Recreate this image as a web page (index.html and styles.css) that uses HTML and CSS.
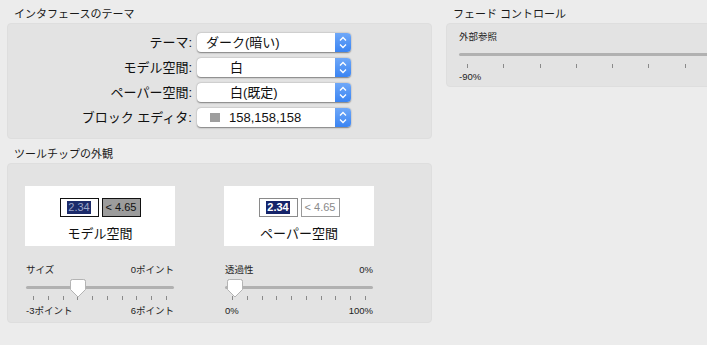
FILE: index.html
```html
<!DOCTYPE html>
<html lang="ja">
<head>
<meta charset="utf-8">
<link rel="stylesheet" href="styles.css">
</head>
<body>
<div class="page">
  <div class="col-left">
    <div class="group-title first">インタフェースのテーマ</div>
    <div class="panel theme-panel">
      <span class="label">テーマ:</span>
      <div class="popup"><span class="value">ダーク(暗い)</span><span class="stepper"><svg width="16" height="19" viewBox="0 0 16 19"><path d="M5 7.5 L8 4.5 L11 7.5 M5 11.5 L8 14.5 L11 11.5" fill="none" stroke="#fff" stroke-width="1.3"/></svg></span></div>
      <span class="label">モデル空間:</span>
      <div class="popup"><span class="value indent">白</span><span class="stepper"><svg width="16" height="19" viewBox="0 0 16 19"><path d="M5 7.5 L8 4.5 L11 7.5 M5 11.5 L8 14.5 L11 11.5" fill="none" stroke="#fff" stroke-width="1.3"/></svg></span></div>
      <span class="label">ペーパー空間:</span>
      <div class="popup"><span class="value indent">白(既定)</span><span class="stepper"><svg width="16" height="19" viewBox="0 0 16 19"><path d="M5 7.5 L8 4.5 L11 7.5 M5 11.5 L8 14.5 L11 11.5" fill="none" stroke="#fff" stroke-width="1.3"/></svg></span></div>
      <span class="label">ブロック エディタ:</span>
      <div class="popup"><span class="swatch"></span><span class="value">158,158,158</span><span class="stepper"><svg width="16" height="19" viewBox="0 0 16 19"><path d="M5 7.5 L8 4.5 L11 7.5 M5 11.5 L8 14.5 L11 11.5" fill="none" stroke="#fff" stroke-width="1.3"/></svg></span></div>
    </div>
    <div class="group-title second">ツールチップの外観</div>
    <div class="panel tooltip-panel">
      <div class="tt-col">
        <div class="preview">
          <div class="chips">
            <span class="chip model-a"><span class="sel">2.34</span></span>
            <span class="chip model-b">&lt; 4.65</span>
          </div>
          <div class="preview-label">モデル空間</div>
        </div>
        <div class="slider">
          <div class="slider-row"><span>サイズ</span><span>0ポイント</span></div>
          <div class="track-wrap">
            <div class="track"></div>
            <svg class="thumb thumb-size" width="16" height="19" viewBox="0 0 16 19"><path d="M2.5 0.5 H13.5 A2 2 0 0 1 15.5 2.5 V10.5 L8 18 L0.5 10.5 V2.5 A2 2 0 0 1 2.5 0.5 Z" fill="#fff" stroke="#b4b4b4"/></svg>
          </div>
          <div class="ticks"><i></i><i></i><i></i><i></i><i></i><i></i><i></i><i></i><i></i><i></i></div>
          <div class="slider-row foot"><span>-3ポイント</span><span>6ポイント</span></div>
        </div>
      </div>
      <div class="tt-col">
        <div class="preview">
          <div class="chips">
            <span class="chip paper-a"><span class="sel bold">2.34</span></span>
            <span class="chip paper-b">&lt; 4.65</span>
          </div>
          <div class="preview-label">ペーパー空間</div>
        </div>
        <div class="slider">
          <div class="slider-row"><span>透過性</span><span>0%</span></div>
          <div class="track-wrap">
            <div class="track"></div>
            <svg class="thumb thumb-trans" width="16" height="19" viewBox="0 0 16 19"><path d="M2.5 0.5 H13.5 A2 2 0 0 1 15.5 2.5 V10.5 L8 18 L0.5 10.5 V2.5 A2 2 0 0 1 2.5 0.5 Z" fill="#fff" stroke="#b4b4b4"/></svg>
          </div>
          <div class="ticks"><i></i><i></i><i></i><i></i><i></i><i></i><i></i><i></i><i></i><i></i></div>
          <div class="slider-row foot"><span>0%</span><span>100%</span></div>
        </div>
      </div>
    </div>
  </div>
  <div class="col-right">
    <div class="group-title first">フェード コントロール</div>
    <div class="panel fade-panel">
      <div class="fade-label">外部参照</div>
      <div class="fade-track"></div>
      <div class="fade-ticks"><i></i><i></i><i></i><i></i><i></i><i></i><i></i></div>
      <div class="fade-foot">-90%</div>
    </div>
  </div>
</div>
</body>
</html>
```

FILE: styles.css
```css
* { box-sizing: border-box; }
html, body {
  margin: 0;
  padding: 0;
  background: #ececec;
  overflow: hidden;
}
body {
  font-family: "Liberation Sans", "Noto Sans CJK JP", sans-serif;
  color: #1a1a1a;
  width: 707px;
  height: 345px;
}
.page {
  display: flex;
  padding-left: 7px;
  gap: 14px;
}
.col-left { width: 425px; flex: none; }
.col-right { width: 280px; flex: none; }

.group-title {
  font-size: 11px;
  line-height: 13px;
  padding-left: 7px;
  color: #1a1a1a;
}
.group-title.first { height: 23px; padding-top: 8px; }
.group-title.second { height: 24px; padding-top: 9px; }

.panel {
  background: #e3e3e3;
  border: 1px solid #dedede;
  border-radius: 4px;
}

/* theme panel */
.theme-panel {
  height: 116px;
  padding-top: 9px;
  display: grid;
  grid-template-columns: 184px 154px;
  grid-auto-rows: 19px;
  row-gap: 6px;
  column-gap: 5px;
}
.label {
  font-size: 13px;
  line-height: 19px;
  text-align: right;
  color: #111;
}
.popup {
  background: #fff;
  border-radius: 4px;
  box-shadow: 0 0.5px 1.5px rgba(0,0,0,0.45);
  display: flex;
  align-items: center;
  font-size: 13px;
  line-height: 19px;
  height: 19px;
  position: relative;
  padding-left: 9px;
}
.value { flex: 1; color: #111; }
.value.indent { padding-left: 24px; }
.swatch {
  width: 10px;
  height: 9px;
  background: #9e9e9e;
  margin-left: 4px;
  margin-right: 9px;
}
.stepper {
  width: 16px;
  height: 19px;
  background: linear-gradient(#6fa8f8, #3a84f3);
  border-radius: 0 4px 4px 0;
  display: flex;
}

/* tooltip panel */
.tooltip-panel {
  height: 160px;
  padding: 22px 0 0 17px;
  display: flex;
  gap: 49px;
}
.tt-col { width: 150px; }
.preview {
  background: #fff;
  height: 60px;
  display: flex;
  flex-direction: column;
  align-items: center;
  padding-top: 12px;
}
.chips { display: flex; gap: 3px; }
.chip {
  width: 39px;
  height: 19px;
  font-size: 11px;
  line-height: 13px;
  display: flex;
  align-items: center;
  justify-content: center;
}
.model-a { border: 1.5px solid #111; background: #fff; }
.model-a .sel { background: #1c2b6a; color: #9aa6c8; padding: 0 1px; }
.model-b { border: 1.5px solid #111; background: #9c9c9c; color: #111; }
.paper-a { border: 1.5px solid #8a8a8a; background: #fff; }
.paper-a .sel { background: #15246a; color: #fff; padding: 0 1px; }
.bold { font-weight: bold; }
.paper-b { border: 1.5px solid #9a9a9a; background: #fff; color: #8a8a8a; }
.preview-label {
  font-size: 13px;
  line-height: 15px;
  margin-top: 9px;
  color: #111;
}

.slider { padding: 0 1px; }
.slider-row {
  display: flex;
  justify-content: space-between;
  font-size: 9.5px;
  line-height: 12px;
  margin-top: 18px;
  color: #222;
}
.slider-row.foot { margin-top: 5px; }
.track-wrap {
  position: relative;
  height: 20px;
  padding-top: 10px;
}
.track {
  height: 3px;
  background: #b1b1b1;
  border-radius: 2px;
}
.thumb {
  position: absolute;
  top: 3px;
  filter: drop-shadow(0 0.5px 0.5px rgba(0,0,0,0.2));
}
.thumb-size { left: 44px; }
.thumb-trans { left: 2px; }
.ticks {
  display: flex;
  justify-content: space-between;
  padding: 0 7px;
  height: 4px;
}
.ticks i, .fade-ticks i {
  display: block;
  width: 1px;
  height: 4px;
  background: #8a8a8a;
}

/* fade panel */
.fade-panel {
  height: 64px;
  padding: 7px 0 0 12px;
}
.fade-label {
  font-size: 9.5px;
  line-height: 12px;
  color: #222;
}
.fade-track {
  margin-top: 10px;
  height: 3px;
  background: #b1b1b1;
  border-radius: 2px;
}
.fade-ticks {
  display: flex;
  gap: 35.3px;
  padding-left: 8px;
  margin-top: 8px;
}
.fade-foot {
  font-size: 9.5px;
  line-height: 12px;
  margin-top: 3px;
  color: #222;
}
```
